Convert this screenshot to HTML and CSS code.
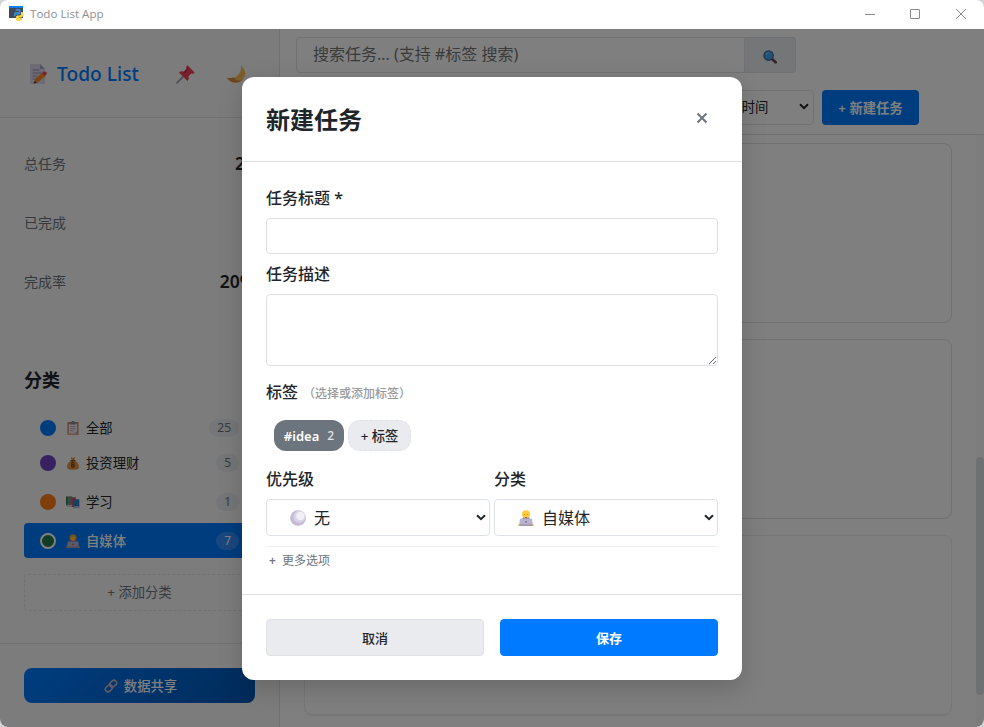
FILE: index.html
```html
<!DOCTYPE html>
<html lang="zh-CN">
<head>
<meta charset="utf-8">
<title>Todo List App</title>
<link rel="stylesheet" href="styles.css">
</head>
<body>
<svg class="defs" aria-hidden="true">
  <symbol id="memo" viewBox="0 0 20 20">
    <path d="M1 0h10l5 5v15H1z" fill="#dcd6ec"/><path d="M11 0v5h5z" fill="#a9a3c0"/>
    <path d="M3.500 6h7M3.500 9h9M3.500 12h5M3.500 15h4" stroke="#9a93b5" stroke-width="1.200"/>
    <path d="M6.500 14.500 13.500 8.500l3 3.500-7 6-4.500 1.500z" fill="#ff8a1f"/><path d="m13 9 2-1.500q3-.5 2.700 2.500l-1.700 2z" fill="#f0445c"/><path d="m4.500 19.700 1.300-3 2 2z" fill="#563b3b"/>
  </symbol>
  <symbol id="pin" viewBox="0 0 20 20">
    <path d="m1 18.800 7.500-7.500" stroke="#a39cb0" stroke-width="1.800" stroke-linecap="round"/>
    <path d="m11.500 1.300 7.200 7.200-2 1.500-1.500-.4-2.700 2.700q1 2.700-1 4.700L3 8.500q2-2 5-.9l2.600-2.900-.6-1.700z" fill="#f0425b"/><path d="m12 4-4 5" stroke="#c22a50" stroke-width="1.300"/>
  </symbol>
  <symbol id="moon" viewBox="0 0 20 20">
    <path d="M15 1.500c5 4 5.500 10 1.500 14.200-4.500 4.500-12 4-15.300-1.700 5 .6 10-.5 12.300-4.700 1.400-2.700 1.700-5 1.500-7.800z" fill="#f9bd58"/><path d="M1.200 14c3 5 10 6.300 15 2-4.700 1.600-7 0-8-2.400-2 .6-4.500.7-7 .4z" fill="#d98a40"/>
  </symbol>
  <symbol id="lens" viewBox="0 0 20 20">
    <path d="m12.500 12.500 5.500 5" stroke="#6d4b57" stroke-width="4" stroke-linecap="round"/><circle cx="8" cy="8" r="6.700" fill="#3ea9ee" stroke="#41628e" stroke-width="1.700"/><path d="M4.500 7q1-3 4-3" fill="none" stroke="#a9def9" stroke-width="1.300"/>
  </symbol>
  <symbol id="clip" viewBox="0 0 20 20">
    <rect x="2" y="1.500" width="16" height="18" rx="1" fill="#cf8b59"/><path d="M4 4h12v14H4z" fill="#eee8f6"/><path d="M6 1.500h2a2 2 0 0 1 4 0h2V5H6z" fill="#8b8796"/><path d="M6 8h8M6 11h8M6 14h5" stroke="#aca3be" stroke-width="1.200"/><path d="m12 18 4-4v4z" fill="#b7acc8"/>
  </symbol>
  <symbol id="money" viewBox="0 0 20 20">
    <path d="M7 1.500 10 3l3-1.500L12 6c4 2 7.500 7 6.500 11q-1 2.500-8.500 2.500T1.500 17C.5 13 4 8 8 6z" fill="#e69642"/><path d="M6.500 6.500h7" stroke="#8a4d31" stroke-width="1.700"/><path d="M8 9v7h2.500q2-.2 2-2t-2-1.600H8h2q2-.1 2-1.700T10 9zM10 7.800v9.500" stroke="#70451e" fill="none" stroke-width="1.200"/>
  </symbol>
  <symbol id="books" viewBox="0 0 20 20">
    <path d="M0 2h9v14H2L0 14z" fill="#416d5b"/><path d="M2 3h8v11H2z" fill="#669679"/><path d="m8 4 6-1v14H8z" fill="#d64465"/><path d="M12 6h7v12l-8 1z" fill="#2583c6"/><path d="M11 16h9v3h-8z" fill="#bfc4df"/><path d="M1 14h8v2H2z" fill="#d3cadc"/>
  </symbol>
  <symbol id="worker" viewBox="0 0 20 20">
    <path d="M5 11q1-3 5-3t5 3z" fill="#6a63a8"/><circle cx="10" cy="5.200" r="5" fill="#ffc83d"/><circle cx="8" cy="5.300" r=".7" fill="#c58f36"/><circle cx="12" cy="5.300" r=".7" fill="#c58f36"/><path d="M8.500 9h3L10 11z" fill="#594a42"/><path d="M2.500 10.800h15l1 8h-17z" fill="#b9b1cd"/><path d="M1.200 18h17.600v2H1.200z" fill="#9f97b6"/><circle cx="10" cy="14.800" r="1.100" fill="#716991"/><path d="M.2 18h2v1.800h-2zM17.800 18h2v1.800h-2z" fill="#ffb92e"/>
  </symbol>
  <symbol id="manager" viewBox="0 0 20 20">
    <path d="M4 11q0-3 6-3t6 3z" fill="#596bc0"/><circle cx="10" cy="5.200" r="5" fill="#f29a35"/><path d="M6.500 5q4-.2 5-2.200 1 2 2 2.200-.5 4-3.500 4T6.500 5z" fill="#ffc83d"/><path d="M2.500 10.800h15l1 8h-17z" fill="#b9b1cd"/><path d="M1.200 18h17.600v2H1.200z" fill="#9f97b6"/><circle cx="10" cy="14.800" r="1.100" fill="#716991"/><path d="M.2 17.500h2v2.300h-2zM17.800 17.500h2v2.300h-2z" fill="#f29a35"/>
  </symbol>
  <symbol id="whitecircle" viewBox="0 0 20 20">
    <circle cx="10" cy="10" r="9.800" fill="#c6b8d9"/><circle cx="11.700" cy="8.500" r="7.600" fill="#d9d3e4"/><circle cx="13" cy="7.500" r="5.300" fill="#f1eff5"/>
  </symbol>
  <symbol id="link" viewBox="0 0 20 20">
    <g fill="none" stroke="#c5b6be" stroke-width="2.200"><rect x="7.500" y="3" width="11" height="7.500" rx="3.700" transform="rotate(-42 13 6.700)"/><rect x="1.500" y="9.500" width="11" height="7.500" rx="3.700" transform="rotate(-42 7 13.200)"/></g>
  </symbol>
  <symbol id="chev" viewBox="0 0 10 7"><path d="m1 1.200 4 4 4-4" fill="none" stroke="currentColor" stroke-width="2"/></symbol>
</svg>

<div class="window">
  <header class="titlebar">
    <svg class="app-icon" viewBox="0 0 15 15"><path d="M0 0h14v12H0z" fill="#414956"/><path d="M0 0h14v2H0z" fill="#087cff"/><path d="M5 9V7.500Q5 6 6.500 6H10V5H6.500V4q0-1.300 2.500-1.300T11.500 4v3q0 1.500-1.500 1.500H8q-1.500 0-1.500 2H5.500Q4 10.300 5 9z" fill="#3c86c4"/><path d="M12 6h1.500Q15 7 14.500 9.500 14 11 12 11h-2v.6h3V13q0 2-3 2t-3-2v-2q0-1.500 1.500-1.500h2Q12 9.500 12 8z" fill="#fbd348"/></svg>
    <span class="app-name">Todo List App</span>
    <svg class="win-buttons" viewBox="0 0 104 12"><g fill="none" stroke="#8a8a8a"><path d="M1 6.500h10"/><rect x="46.500" y="1.500" width="9" height="9" rx=".5"/><path d="m92 1 10 10M102 1 92 11"/></g></svg>
  </header>

  <div class="app">
    <aside class="sidebar">
      <div class="brand">
        <svg class="i20"><use href="#memo"/></svg><span class="brand-name">Todo List</span>
        <svg class="i20 brand-pin"><use href="#pin"/></svg><svg class="i20 brand-moon"><use href="#moon"/></svg>
      </div>
      <div class="stats">
        <div class="stat"><span>总任务</span><b>25</b></div>
        <div class="stat"><span>已完成</span><b>5</b></div>
        <div class="stat"><span>完成率</span><b>20%</b></div>
      </div>
      <div class="cats">
        <h3>分类</h3>
        <div class="cat first"><i class="dot blue"></i><svg class="i14"><use href="#clip"/></svg><span>全部</span><em>25</em></div>
        <div class="cat"><i class="dot purple"></i><svg class="i14"><use href="#money"/></svg><span>投资理财</span><em>5</em></div>
        <div class="cat"><i class="dot orange"></i><svg class="i14"><use href="#books"/></svg><span>学习</span><em>1</em></div>
        <div class="cat active"><i class="dot green"></i><svg class="i14"><use href="#manager"/></svg><span>自媒体</span><em>7</em></div>
        <div class="add-cat">+ 添加分类</div>
      </div>
      <div class="side-foot"><div class="share"><svg class="i14"><use href="#link"/></svg>数据共享</div></div>
    </aside>

    <main class="main">
      <div class="toolbar">
        <div class="search"><div class="search-input">搜索任务... (支持 #标签 搜索)</div><div class="search-btn"><svg class="i14"><use href="#lens"/></svg></div></div>
        <div class="filters"><div class="sort"><span>创建时间</span><svg class="chev"><use href="#chev"/></svg></div><div class="new-task">+ 新建任务</div></div>
      </div>
      <div class="list">
        <div class="cards"><div class="card"></div><div class="card"></div><div class="card faded"></div></div>
        <div class="scroll"><div class="thumb"></div></div>
      </div>
    </main>

    <div class="overlay">
      <section class="modal">
        <header class="modal-head"><h2>新建任务</h2><svg class="close" viewBox="0 0 12 12"><path d="m1.500 1.500 9 9M10.500 1.500l-9 9" stroke="#6c757d" stroke-width="2"/></svg></header>
        <div class="modal-body">
          <label class="label">任务标题 *</label>
          <input class="input" type="text">
          <label class="label">任务描述</label>
          <textarea class="area"></textarea>
          <div class="label tag-label">标签<small>（选择或添加标签）</small></div>
          <div class="tags"><span class="tag">#idea<b>2</b></span><span class="tag add">+ 标签</span></div>
          <div class="row">
            <div class="col"><div class="label">优先级</div><div class="select"><svg class="i16"><use href="#whitecircle"/></svg><span>无</span><svg class="chev"><use href="#chev"/></svg></div></div>
            <div class="col"><div class="label">分类</div><div class="select"><svg class="i16"><use href="#worker"/></svg><span>自媒体</span><svg class="chev"><use href="#chev"/></svg></div></div>
          </div>
          <div class="more"><b>+</b>更多选项</div>
        </div>
        <footer class="modal-foot"><button class="btn">取消</button><button class="btn primary">保存</button></footer>
      </section>
    </div>
  </div>
</div>
</body>
</html>
```
FILE: styles.css
```css
* { box-sizing: border-box; }
body { margin: 0; background: #d4d4d8; font-family: "Noto Sans", "Noto Sans CJK SC", sans-serif; color: #212529; overflow: hidden; }
h2, h3 { margin: 0; }
.defs { display: none; }
.window { width: 984px; height: 727px; display: flex; flex-direction: column; border-radius: 8px; overflow: hidden; background: #fff; }

.titlebar { height: 29px; flex: none; display: flex; align-items: center; padding: 0 16px 2px 9px; color: #8f8f8f; }
.app-icon { width: 15px; height: 15px; }
.app-name { margin-left: 6px; padding-top: 1px; font: 11.6px/16px "Open Sans", sans-serif; }
.win-buttons { width: 104px; height: 12px; margin-left: auto; }

.app { flex: 1; min-height: 0; display: flex; position: relative; }
.i20 { width: 20px; height: 20px; flex: none; }
.i16 { width: 16px; height: 16px; flex: none; }
.i14 { width: 14px; height: 14px; flex: none; }
.chev { width: 10px; height: 7px; margin-left: auto; flex: none; }

.sidebar { width: 280px; flex: none; display: flex; flex-direction: column; background: #f8f9fa; border-right: 1px solid #dee2e6; }
.brand { height: 89px; flex: none; display: flex; align-items: center; padding: 2px 0 0 29px; border-bottom: 1px solid #dee2e6; }
.brand-name { width: 81px; margin: 0 38px 0 8px; font: 500 19.2px/28px "Noto Sans", sans-serif; white-space: nowrap; color: #007bff; }
.brand-moon { margin-left: 30px; }
.stats { padding: 15px 24px 0; height: 218px; flex: none; }
.stat { height: 59px; display: flex; align-items: center; justify-content: space-between; font-size: 14px; color: #6c757d; }
.stat b { font-size: 17.5px; font-weight: 600; color: #212529; }
.cats { flex: 1; padding: 30px 24px 0; }
.cats h3 { font-size: 18px; line-height: 28px; margin-bottom: 16px; }
.cat { height: 35px; margin-bottom: 4px; padding: 0 16px; display: flex; align-items: center; font-size: 13.333px; border-radius: 4px; }
.cat.first { margin-bottom: 0; }
.dot { width: 16px; height: 16px; border-radius: 50%; margin-right: 10px; }
.blue { background: #007bff; }
.purple { background: #6f42c1; }
.orange { background: #fd7e14; }
.green { background: #28784a; border: 2px solid #fff; }
.cat span { margin-left: 6px; }
.cat em { margin-left: auto; height: 18px; padding: 0 8px; border-radius: 9px; background: #e9ecef; color: #6c757d; font: 12px/18px "Noto Sans", sans-serif; }
.cat.active { background: #007bff; color: #fff; font-weight: 500; }
.cat.active em { background: #338fff; color: #fff; }
.add-cat { height: 37px; margin-top: 16px; border: 1px dashed #dee2e6; border-radius: 4px; text-align: center; font-size: 13.333px; line-height: 35px; color: #6c757d; }
.side-foot { height: 84px; flex: none; padding: 24px; border-top: 1px solid #dee2e6; }
.share { height: 35px; border-radius: 8px; background: linear-gradient(135deg, #007bff, #0056b3); color: #fff; display: flex; align-items: center; justify-content: center; gap: 6px; padding-left: 2px; font-size: 13.333px; font-weight: 500; }

.main { flex: 1; min-width: 0; display: flex; flex-direction: column; background: #fff; }
.toolbar { height: 106px; flex: none; padding: 8px 16px 0; border-bottom: 1px solid #dee2e6; }
.search { display: flex; width: 500px; height: 36px; margin-bottom: 17px; }
.search-input { width: 449px; border: 1px solid #dee2e6; border-radius: 4px 0 0 4px; padding-left: 16px; font-size: 16px; line-height: 33px; color: #757575; }
.search-btn { width: 51px; border: 1px solid #dee2e6; border-left: 0; border-radius: 0 4px 4px 0; background: #e9ecef; display: flex; align-items: center; justify-content: center; padding-top: 3px; }
.filters { display: flex; justify-content: flex-end; gap: 8px; width: 623px; }
.sort { width: 130px; height: 35px; border: 1px solid #dee2e6; border-radius: 4px; display: flex; align-items: center; padding: 0 4px 2px 30px; font-size: 13.333px; }
.new-task { width: 97px; height: 35px; border-radius: 4px; background: #007bff; color: #fff; font-size: 13.333px; font-weight: 600; line-height: 36px; text-align: center; white-space: nowrap; }
.list { flex: 1; min-height: 0; display: flex; }
.cards { flex: 1; display: flex; flex-direction: column; gap: 16px; padding: 8px 24px 0; }
.card { height: 180px; flex: none; border: 1px solid #dee2e6; border-radius: 8px; }
.card.faded { border-color: #e9ecef; box-shadow: 0 1px 0 #e6e8ea; }
.scroll { width: 8px; background: #fafafa; padding-top: 322px; }
.thumb { height: 238px; border-radius: 4px; background: #dce2e4; }

.overlay { position: absolute; inset: 0; background: rgba(0, 0, 0, .5); display: flex; align-items: flex-start; justify-content: center; padding-top: 48px; }
.modal { width: 500px; height: 603px; background: #fff; border-radius: 12px; box-shadow: 0 8px 24px rgba(0, 0, 0, .18); }
.modal-head { height: 85px; display: flex; align-items: center; justify-content: space-between; padding: 0 34px 2px 24px; border-bottom: 1px solid #dee2e6; }
.modal-head h2 { padding-top: 3px; font-size: 24px; line-height: 36px; font-weight: 600; }
.close { width: 12px; height: 12px; }
.modal-body { height: 432px; padding: 24px 24px 0; }
.label { display: block; height: 24px; margin-bottom: 8px; font-size: 16px; line-height: 24px; font-weight: 500; }
.input, .area { display: block; width: 100%; border: 1px solid #dee2e6; border-radius: 4px; background: #fff; margin: 0 0 8px; }
.input { height: 36px; }
.area { height: 72px; resize: vertical; margin-bottom: 14px; }
.tag-label small { margin-left: 5px; font-size: 12px; color: #999; }
.tags { display: flex; gap: 4px; padding: 8px 8px 0; margin-bottom: 16px; }
.tag { width: 70px; height: 31px; border-radius: 12px; background: #6c757d; color: #fff; display: flex; align-items: center; justify-content: center; gap: 8px; font-size: 13px; font-weight: 600; }
.tag b { font-size: 12px; font-weight: 500; opacity: .8; }
.tag.add { width: 63px; background: #e9ebef; border: 1px dashed #dee2e6; color: #212529; font-size: 13.333px; font-weight: 500; padding-bottom: 1px; }
.row { display: flex; gap: 4px; }
.col { flex: 1; }
.select { height: 37px; border: 1px solid #dee2e6; border-radius: 4px; display: flex; align-items: center; padding: 0 3px 0 23px; font-size: 16px; }
.select span { margin-left: 8px; padding-bottom: 2px; }
.more { margin-top: 10px; border-top: 1px solid #f0f1f3; padding: 5px 3px; font-size: 12px; line-height: 18px; color: #6c757d; }
.more b { margin-right: 6px; font-weight: 600; }
.modal-foot { height: 86px; border-top: 1px solid #dee2e6; padding: 24px; display: flex; gap: 16px; }
.btn { flex: 1; height: 37px; border: 1px solid #dee2e6; border-radius: 4px; background: #e9ebef; color: #212529; font: 500 13px "Noto Sans", "Noto Sans CJK SC", sans-serif; padding: 0 0 1px; }
.btn.primary { border-color: #007bff; background: #007bff; color: #fff; font-weight: 700; }
```
